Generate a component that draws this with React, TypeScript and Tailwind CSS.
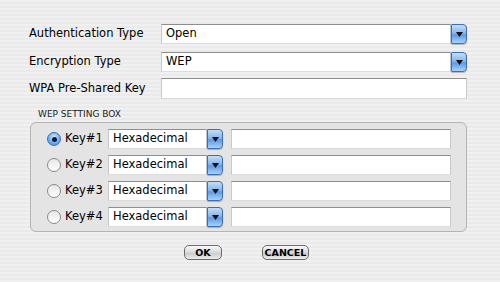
import React from "react";

const font = { fontFamily: '"DejaVu Sans", "Liberation Sans", sans-serif' };

function PopButton() {
  return (
    <div className="w-[16px] h-full rounded-r-[4px] rounded-l-[1px] border border-[#3a6fb8] bg-[linear-gradient(to_bottom,#c4ddf8_0%,#86b6ee_45%,#5d99e4_55%,#a5d3fb_100%)] flex items-center justify-center shadow-[0_1px_1px_rgba(0,0,0,0.25)]">
      <svg width="7" height="5" viewBox="0 0 7 5">
        <path d="M0 0 H7 L3.5 5 Z" fill="#111" />
      </svg>
    </div>
  );
}

function Select({ value, className }: { value: string; className: string }) {
  return (
    <div className={`flex items-stretch ${className}`}>
      <div className="flex-1 bg-white border-t border-t-[#8e8e8e] border-x border-x-[#c8c8c8] border-b border-b-[#dcdcdc] flex items-center pl-[4px] text-black">
        {value}
      </div>
      <PopButton />
    </div>
  );
}

function TextBox({ className }: { className: string }) {
  return (
    <div
      className={`bg-white border-t border-t-[#8e8e8e] border-x border-x-[#c8c8c8] border-b border-b-[#dcdcdc] ${className}`}
    />
  );
}

function Radio({ checked }: { checked: boolean }) {
  if (checked) {
    return (
      <div className="w-[14px] h-[14px] rounded-full border border-[#3b6fb5] bg-[radial-gradient(circle_at_50%_35%,#d6ebff_0%,#7ab3ef_50%,#3f86e0_100%)] flex items-center justify-center">
        <div className="w-[5px] h-[5px] rounded-full bg-[#0b1b3a]" />
      </div>
    );
  }
  return (
    <div className="w-[14px] h-[14px] rounded-full border border-[#8a8a8a] bg-[linear-gradient(to_bottom,#e6e6e6,#ffffff)]" />
  );
}

function KeyRow({ n, checked }: { n: number; checked: boolean }) {
  return (
    <div className="flex items-center h-[20px]">
      <div className="w-[18px] ml-[16px]">
        <Radio checked={checked} />
      </div>
      <div className="w-[43px] text-[11.5px]">Key#{n}</div>
      <Select value="Hexadecimal" className="w-[115px] h-full text-[11.5px]" />
      <TextBox className="ml-[8px] w-[220px] h-full" />
    </div>
  );
}

export default function App() {
  return (
    <div
      className="w-[500px] h-[282px] overflow-hidden text-black bg-[repeating-linear-gradient(to_bottom,#f0f0f0_0px,#f0f0f0_2px,#eaeaea_2px,#eaeaea_4px)]"
      style={font}
    >
      <div className="pt-[24px] pl-[29px] flex flex-col text-[11.5px]">
        <div className="flex items-center h-[20px]">
          <div className="w-[132px]">Authentication Type</div>
          <Select value="Open" className="w-[306px] h-full" />
        </div>
        <div className="flex items-center h-[20px] mt-[8px]">
          <div className="w-[132px]">Encryption Type</div>
          <Select value="WEP" className="w-[306px] h-full" />
        </div>
        <div className="flex items-center h-[21px] mt-[6px]">
          <div className="w-[132px]">WPA Pre-Shared Key</div>
          <TextBox className="w-[306px] h-full" />
        </div>
      </div>
      <div className="ml-[38px] mt-[9px] text-[9px] leading-[12px] text-[#222]">WEP SETTING BOX</div>
      <div className="ml-[30px] mt-[2px] w-[437px] h-[110px] rounded-[6px] border border-[#b4b4b4] bg-[#e4e4e4] pt-[6px] flex flex-col gap-[6px]">
        <KeyRow n={1} checked />
        <KeyRow n={2} checked={false} />
        <KeyRow n={3} checked={false} />
        <KeyRow n={4} checked={false} />
      </div>
      <div className="flex mt-[13px] ml-[184px] gap-[40px] text-[9.5px] font-bold">
        <button className="w-[38px] h-[15px] rounded-[5px] border border-[#6c6c6c] bg-[linear-gradient(to_bottom,#fafafa,#d8d8d8_50%,#c8c8c8_51%,#ececec)] flex items-center justify-center leading-none">
          OK
        </button>
        <button className="w-[47px] h-[15px] rounded-[5px] border border-[#6c6c6c] bg-[linear-gradient(to_bottom,#fafafa,#d8d8d8_50%,#c8c8c8_51%,#ececec)] flex items-center justify-center leading-none">
          CANCEL
        </button>
      </div>
    </div>
  );
}
